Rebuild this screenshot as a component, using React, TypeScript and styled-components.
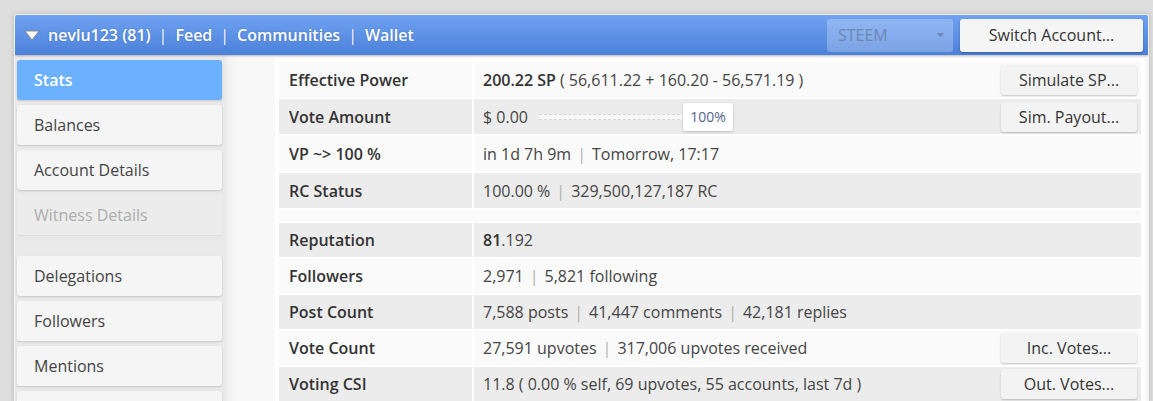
import styled, { createGlobalStyle } from 'styled-components';

const GlobalStyle = createGlobalStyle`
  html, body {
    margin: 0;
    padding: 0;
    overflow: hidden;
    background: #dedede;
    font-family: 'Open Sans', 'Noto Sans', sans-serif;
  }
`;

const Page = styled.div`
  padding: 14px 4px 0 14px;
  height: 401px;
  box-sizing: border-box;
  overflow: hidden;
`;

const Window = styled.div`
  background: #f8f8f8;
  border: 1px solid #f2f2f2;
  border-bottom: none;
  border-radius: 3px 3px 0 0;
  box-shadow: 0 0 5px rgba(0, 0, 0, 0.18);
  height: 387px;
  overflow: hidden;
`;

const Header = styled.div`
  display: flex;
  align-items: center;
  height: 40px;
  padding: 0 5px 0 9px;
  background: linear-gradient(#6fa2f1, #4c81da);
  box-shadow: 0 1px 2px rgba(0, 0, 0, 0.25);
  position: relative;
  z-index: 2;
`;

const Nav = styled.div`
  display: flex;
  align-items: center;
  color: #fff;
  font-size: 16px;
  font-weight: 600;
  text-shadow: 0 0 2px rgba(0, 0, 0, 0.2);
`;

const NavSep = styled.span`
  margin: 0 8px 0 8px;
  font-weight: 400;
`;

const Caret = styled.svg`
  margin-right: 8px;
`;

const Spacer = styled.div`
  flex: 1;
`;

const Select = styled.div`
  display: flex;
  align-items: center;
  justify-content: space-between;
  width: 126px;
  height: 33px;
  box-sizing: border-box;
  padding: 0 9px 0 11px;
  border-radius: 3px;
  background: rgba(255, 255, 255, 0.25);
  color: #6f86b2;
  font-size: 16px;
`;

const SwitchButton = styled.div`
  display: flex;
  align-items: center;
  justify-content: center;
  width: 183px;
  height: 33px;
  margin-left: 7px;
  border-radius: 3px;
  background: #f5f5f5;
  box-shadow: 0 1px 2px rgba(0, 0, 0, 0.3);
  color: #333;
  font-size: 16px;
`;

const Body = styled.div`
  display: flex;
  align-items: flex-start;
`;

const Sidebar = styled.div`
  width: 210px;
  flex-shrink: 0;
  align-self: stretch;
  min-height: 400px;
  box-sizing: border-box;
  padding: 5px 3px 0 2px;
  background: #e9e9e9;
  box-shadow: 3px 0 12px rgba(0, 0, 0, 0.07);
  display: flex;
  flex-direction: column;
  gap: 5px;
`;

const SideItem = styled.div<{ $active?: boolean; $disabled?: boolean; $gapBefore?: boolean }>`
  display: flex;
  align-items: center;
  height: 40px;
  flex-shrink: 0;
  padding-left: 17px;
  margin-top: ${(p) => (p.$gapBefore ? '16px' : '0')};
  border-radius: 3px;
  font-size: 16px;
  background: ${(p) => (p.$active ? '#6cb1fe' : p.$disabled ? '#ececec' : '#f5f5f5')};
  color: ${(p) => (p.$active ? '#fff' : p.$disabled ? '#adadad' : '#444')};
  font-weight: ${(p) => (p.$active ? 600 : 400)};
  box-shadow: ${(p) => (p.$disabled ? '0 1px 1px rgba(0,0,0,0.06)' : '0 1px 2px rgba(0, 0, 0, 0.15)')};
`;

const Content = styled.div`
  flex: 1;
  padding: 3px 3px 0 50px;
`;

const TableWrap = styled.div`
  background: #fff;
  padding: 2px;
`;

const Table = styled.table`
  width: 100%;
  border-collapse: separate;
  border-spacing: 2px;
  font-size: 16px;
  color: #444;

  tr:nth-child(odd) td {
    background: #fafafa;
  }
  tr:nth-child(even) td {
    background: #ececec;
  }
`;

const Row = styled.tr<{ $height: number }>`
  height: ${(p) => p.$height}px;
`;

const LabelCell = styled.td`
  width: 173px;
  padding: 0 10px;
  font-weight: 600;
  color: #333;
  white-space: nowrap;
`;

const ValueCell = styled.td`
  padding: 0 4px 0 9px;
  white-space: nowrap;
`;

const ValueLine = styled.div`
  display: flex;
  align-items: center;
  justify-content: space-between;
`;

const Values = styled.div`
  display: flex;
  align-items: center;
`;

const Strong = styled.span`
  font-weight: 600;
  color: #333;
  margin-right: 4px;
`;

const StrongTight = styled.span`
  font-weight: 600;
  color: #333;
`;

const Sep = styled.span`
  color: #b0b0b0;
  margin: 0 6px;
`;

const RowButton = styled.div`
  display: flex;
  align-items: center;
  justify-content: center;
  width: 136px;
  height: 30px;
  border-radius: 3px;
  background: #f3f3f3;
  box-shadow: 0 1px 2px rgba(0, 0, 0, 0.22);
  color: #333;
  font-size: 16px;
`;

const Slider = styled.div`
  display: flex;
  align-items: center;
  margin-left: 11px;
`;

const Track = styled.div`
  width: 146px;
  height: 4px;
  border-top: 1px dashed #d6d6d6;
  border-bottom: 1px dashed #d6d6d6;
  background: #f7f7f7;
`;

const Thumb = styled.div`
  display: flex;
  align-items: center;
  justify-content: center;
  width: 50px;
  height: 28px;
  margin-left: -2px;
  border-radius: 3px;
  background: #fff;
  box-shadow: 0 1px 3px rgba(0, 0, 0, 0.2);
  color: #56648c;
  font-size: 14px;
`;

type Stat = {
  label: string;
  value: React.ReactNode;
  button?: string;
};

const join = (parts: React.ReactNode[]) =>
  parts.map((p, i) => (
    <span key={i}>
      {i > 0 && <Sep>|</Sep>}
      {p}
    </span>
  ));

const firstGroup: Stat[] = [
  {
    label: 'Effective Power',
    value: (
      <>
        <Strong>200.22 SP</Strong>( 56,611.22 + 160.20 - 56,571.19 )
      </>
    ),
    button: 'Simulate SP...',
  },
  {
    label: 'Vote Amount',
    value: (
      <>
        $ 0.00
        <Slider>
          <Track />
          <Thumb>100%</Thumb>
        </Slider>
      </>
    ),
    button: 'Sim. Payout...',
  },
  { label: 'VP ~> 100 %', value: join(['in 1d 7h 9m', 'Tomorrow, 17:17']) },
  { label: 'RC Status', value: join(['100.00 %', '329,500,127,187 RC']) },
];

const secondGroup: Stat[] = [
  {
    label: 'Reputation',
    value: (
      <>
        <StrongTight>81</StrongTight>.192
      </>
    ),
  },
  { label: 'Followers', value: join(['2,971', '5,821 following']) },
  { label: 'Post Count', value: join(['7,588 posts', '41,447 comments', '42,181 replies']) },
  {
    label: 'Vote Count',
    value: join(['27,591 upvotes', '317,006 upvotes received']),
    button: 'Inc. Votes...',
  },
  {
    label: 'Voting CSI',
    value: '11.8 ( 0.00 % self, 69 upvotes, 55 accounts, last 7d )',
    button: 'Out. Votes...',
  },
];

const menu = [
  { name: 'Stats', active: true },
  { name: 'Balances' },
  { name: 'Account Details' },
  { name: 'Witness Details', disabled: true },
  { name: 'Delegations', gap: true },
  { name: 'Followers' },
  { name: 'Mentions' },
  { name: '' },
];

const StatRow = ({ stat, height }: { stat: Stat; height: number }) => (
  <Row $height={height}>
    <LabelCell>{stat.label}</LabelCell>
    <ValueCell>
      <ValueLine>
        <Values>{stat.value}</Values>
        {stat.button && <RowButton>{stat.button}</RowButton>}
      </ValueLine>
    </ValueCell>
  </Row>
);

export default function App() {
  return (
    <>
      <GlobalStyle />
      <Page>
        <Window>
          <Header>
            <Nav>
              <Caret width="16" height="11" viewBox="0 0 16 11">
                <polygon points="1,1 15,1 8,10" fill="#fff" stroke="#8a8a8a" strokeWidth="1" strokeLinejoin="round" />
              </Caret>
              nevlu123 (81)
              <NavSep>|</NavSep>
              Feed
              <NavSep>|</NavSep>
              Communities
              <NavSep>|</NavSep>
              Wallet
            </Nav>
            <Spacer />
            <Select>
              STEEM
              <svg width="7" height="4" viewBox="0 0 7 4">
                <polygon points="0,0 7,0 3.5,4" fill="#6f86b2" />
              </svg>
            </Select>
            <SwitchButton>Switch Account...</SwitchButton>
          </Header>
          <Body>
            <Sidebar>
              {menu.map((m, i) => (
                <SideItem key={i} $active={m.active} $disabled={m.disabled} $gapBefore={m.gap}>
                  {m.name}
                </SideItem>
              ))}
            </Sidebar>
            <Content>
              <TableWrap>
                <Table>
                  <tbody>
                    {firstGroup.map((s) => (
                      <StatRow key={s.label} stat={s} height={35} />
                    ))}
                    <Row $height={11}>
                      <td colSpan={2} />
                    </Row>
                    {secondGroup.map((s) => (
                      <StatRow key={s.label} stat={s} height={34} />
                    ))}
                  </tbody>
                </Table>
              </TableWrap>
            </Content>
          </Body>
        </Window>
      </Page>
    </>
  );
}
